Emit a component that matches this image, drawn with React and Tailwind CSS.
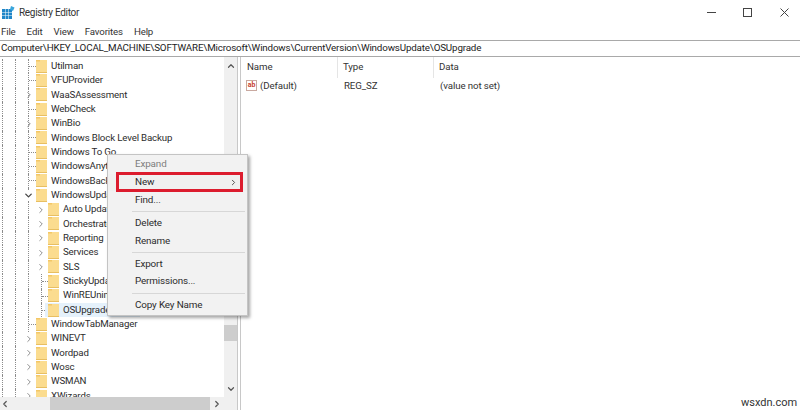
import { ChevronRight, ChevronDown, ChevronUp, ChevronLeft } from 'lucide-react';

const ROWS = [
  { name: 'Utilman', level: 1 },
  { name: 'VFUProvider', level: 1 },
  { name: 'WaaSAssessment', level: 1, arrow: 'right' },
  { name: 'WebCheck', level: 1 },
  { name: 'WinBio', level: 1, arrow: 'right' },
  { name: 'Windows Block Level Backup', level: 1 },
  { name: 'Windows To Go', level: 1 },
  { name: 'WindowsAnytimeUpgrade', level: 1 },
  { name: 'WindowsBackup', level: 1 },
  { name: 'WindowsUpdate', level: 1, arrow: 'down' },
  { name: 'Auto Update', level: 2, arrow: 'right' },
  { name: 'Orchestrator', level: 2, arrow: 'right' },
  { name: 'Reporting', level: 2, arrow: 'right' },
  { name: 'Services', level: 2, arrow: 'right' },
  { name: 'SLS', level: 2, arrow: 'right' },
  { name: 'StickyUpdates', level: 2 },
  { name: 'WinREUninstall', level: 2 },
  { name: 'OSUpgrade', level: 2, selected: true },
  { name: 'WindowTabManager', level: 1 },
  { name: 'WINEVT', level: 1, arrow: 'right', last: true },
  { name: 'Wordpad', level: 1, arrow: 'right', last: true },
  { name: 'Wosc', level: 1, arrow: 'right', last: true },
  { name: 'WSMAN', level: 1, arrow: 'right', last: true },
  { name: 'XWizards', level: 1, arrow: 'right', last: true },
];

function Folder() {
  return (
    <svg width="11" height="13" viewBox="0 0 11 13" className="shrink-0">
      <rect x="0" y="0" width="11" height="13" fill="#fbdc8f" />
      <path d="M0 0h4v1.5H0z" fill="#f3c766" />
      <path d="M0 12.5h11" stroke="#e8bf62" strokeWidth="1" />
    </svg>
  );
}

function TreeRow({ row }) {
  const guide = row.last ? 'border-transparent' : 'border-[#8c8c8c]';
  return (
    <div className="flex h-[14.35px] items-center whitespace-nowrap">
      <div className="ml-[2px] h-full w-[13px] shrink-0 border-l border-dotted border-[#8c8c8c]" />
      <div className="h-full w-[13px] shrink-0 border-l border-dotted border-[#8c8c8c]" />
      <div className={`relative flex h-full w-[8px] shrink-0 items-center border-l border-dotted ${guide}`}>
        {row.level === 1 && !row.arrow && <div className="w-[7px] border-t border-dotted border-[#8c8c8c]" />}
        {row.level === 1 && row.arrow === 'right' && <ChevronRight size={10} strokeWidth={1} absoluteStrokeWidth className="absolute left-[-5px] text-[#8f8f8f]" />}
        {row.level === 1 && row.arrow === 'down' && <ChevronDown size={11} strokeWidth={1.3} absoluteStrokeWidth className="absolute left-[-6px] bg-white text-[#444]" />}
      </div>
      {row.level === 2 && !row.selected && (
        <div className="relative flex h-full w-[12px] shrink-0 items-center">
          {row.arrow ? (
            <ChevronRight size={10} strokeWidth={1} absoluteStrokeWidth className="absolute left-[0px] text-[#8f8f8f]" />
          ) : (
            <div className="ml-[5px] h-full w-[7px] border-l border-dotted border-[#8c8c8c]">
              <div className="mt-[7px] border-t border-dotted border-[#8c8c8c]" />
            </div>
          )}
        </div>
      )}
      {row.selected && (
        <div className="ml-[5px] h-full w-[4px] shrink-0 border-l border-dotted border-[#8c8c8c]">
          <div className="mt-[7px] border-t border-dotted border-[#8c8c8c]" />
        </div>
      )}
      <div className={`flex h-full items-center ${row.selected ? 'bg-[#e5f1fb] pr-[30px] pl-[3px]' : ''}`}>
        <Folder />
        <span className="ml-[4px] text-[9.7px] tracking-[-0.15px] text-[#2c2c2c]">{row.name}</span>
      </div>
    </div>
  );
}

function MenuItem({ label, disabled, arrow, hover }) {
  return (
    <div className={`flex h-[17.6px] items-center justify-between pl-[27px] pr-[9px] text-[9.9px] tracking-[-0.15px] ${disabled ? 'text-[#7d7d7d]' : 'text-[#2c2c2c]'} ${hover ? 'bg-[#f0f0f0]' : ''}`}>
      <span>{label}</span>
      {arrow && <ChevronRight size={9} strokeWidth={1} absoluteStrokeWidth className="text-[#555]" />}
    </div>
  );
}

function Sep() {
  return <div className="my-[2.4px] ml-[24px] mr-[2px] border-t border-[#d7d7d7]" />;
}

export default function App() {
  return (
    <div className="relative flex h-[410px] w-[800px] flex-col overflow-hidden bg-white font-['Roboto',sans-serif] text-[#2c2c2c]">
      <div className="flex h-[23px] items-center pl-[2px] pt-[1px]">
        <svg width="13" height="13" viewBox="0 0 13 13" className="shrink-0">
          <path d="M0 3h3v3H0zM3.5 3h3v3h-3zM7 3h3v3H7zM0 6.5h3v3H0zM3.5 6.5h3v3h-3zM7 6.5h3v3H7zM0 10h3v3H0zM3.5 10h3v3h-3zM7 10h3v3H7z" fill="#1f86c8" />
          <path d="M9 0l3.5 1.5L11 5 8 3.5z" fill="#3aa6dc" />
        </svg>
        <span className="ml-[4px] pt-[1px] text-[10px] tracking-[-0.3px] text-[#333]">Registry Editor</span>
        <div className="ml-auto flex items-center pr-[11px]">
          <svg width="9" height="9" viewBox="0 0 9 9"><path d="M0 4.5h9" stroke="#444" strokeWidth="1" /></svg>
          <svg width="9" height="9" viewBox="0 0 9 9" className="ml-[27px]"><rect x="0.5" y="0.5" width="8" height="8" fill="none" stroke="#444" strokeWidth="1" /></svg>
          <svg width="9" height="9" viewBox="0 0 9 9" className="ml-[28px]"><path d="M0.5 0.5l8 8M8.5 0.5l-8 8" stroke="#444" strokeWidth="1" /></svg>
        </div>
      </div>
      <div className="flex h-[17px] items-center gap-[11px] pl-[1px] pt-[1px] text-[9.7px] tracking-[-0.15px] text-[#333]">
        <span>File</span>
        <span>Edit</span>
        <span>View</span>
        <span>Favorites</span>
        <span>Help</span>
      </div>
      <div className="flex h-[17px] items-center border-y border-[#a9a9a9] pl-[1px] text-[9.8px] tracking-[-0.17px] whitespace-nowrap text-[#222]">
        Computer\HKEY_LOCAL_MACHINE\SOFTWARE\Microsoft\Windows\CurrentVersion\WindowsUpdate\OSUpgrade
      </div>
      <div className="flex min-h-0 flex-1">
        <div className="flex h-full w-[238px] shrink-0 flex-col border-r border-[#c8c8c8]">
          <div className="flex min-h-0 flex-1">
            <div className="min-w-0 flex-1 overflow-hidden pt-[2px]">
              {ROWS.map((row) => (
                <TreeRow key={row.name} row={row} />
              ))}
            </div>
            <div className="flex w-[13px] shrink-0 flex-col items-center bg-[#f0f0f0]">
              <ChevronUp size={10} strokeWidth={1.2} absoluteStrokeWidth className="mt-[4px] text-[#555]" />
              <div className="mt-[254px] h-[16px] w-full bg-[#cdcdcd]" />
              <ChevronDown size={10} strokeWidth={1.2} absoluteStrokeWidth className="mt-[43px] text-[#555]" />
            </div>
          </div>
          <div className="flex h-[13px] shrink-0 items-center bg-[#f0f0f0]">
            <ChevronLeft size={10} strokeWidth={1.2} absoluteStrokeWidth className="text-[#555]" />
            <div className="ml-[40px] h-full w-[160px] bg-[#cdcdcd]" />
            <ChevronRight size={10} strokeWidth={1.2} absoluteStrokeWidth className="ml-[2px] text-[#555]" />
          </div>
        </div>
        <div className="ml-[2px] min-w-0 flex-1 border-l border-[#c8c8c8]">
          <div className="flex h-[21px] items-center text-[9.7px] tracking-[-0.1px] text-[#333]">
            <div className="flex h-full w-[97px] items-center border-r border-[#e5e5e5] pl-[6px]">Name</div>
            <div className="flex h-full w-[96px] items-center border-r border-[#e5e5e5] pl-[5px]">Type</div>
            <div className="flex h-full items-center pl-[5px]">Data</div>
          </div>
          <div className="flex h-[16px] items-center text-[9.7px] tracking-[-0.1px] text-[#333]">
            <div className="flex w-[97px] items-center pl-[5px]">
              <div className="flex h-[11px] w-[11px] items-center justify-center border border-[#c9a9a0] text-[7px] leading-none font-bold text-[#c8402e]">ab</div>
              <span className="ml-[3px]">(Default)</span>
            </div>
            <div className="w-[96px] pl-[6px]">REG_SZ</div>
            <div className="pl-[6px]">(value not set)</div>
          </div>
        </div>
      </div>

      <div className="absolute top-[154px] left-[107px] w-[141px] border border-[#c4c4c4] bg-[#f2f2f2] py-[1px] shadow-[2px_2px_3px_rgba(0,0,0,0.35)]">
        <MenuItem label="Expand" disabled />
        <MenuItem label="New" arrow hover />
        <MenuItem label="Find..." />
        <Sep />
        <MenuItem label="Delete" />
        <MenuItem label="Rename" />
        <Sep />
        <MenuItem label="Export" />
        <MenuItem label="Permissions..." />
        <Sep />
        <MenuItem label="Copy Key Name" />
      </div>
      <div className="absolute top-[172px] left-[116px] h-[20px] w-[127px] border-[3px] border-[#dc1c2e]" />
      <div className="absolute top-[395px] left-[741px] text-[11px] text-[#333]">wsxdn.com</div>
    </div>
  );
}
